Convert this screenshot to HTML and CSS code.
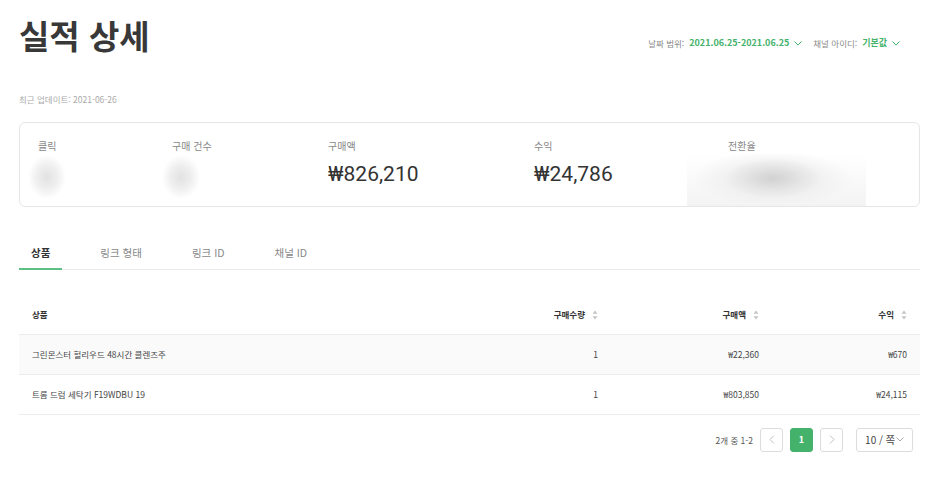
FILE: index.html
```html
<!DOCTYPE html>
<html lang="ko">
<head>
    <meta charset="UTF-8">
    <title>실적 상세</title>
    <link rel="stylesheet" href="styles.css">
</head>
<body>
    <div id="wrap">
        <header class="top">
            <h1 class="title">실적 상세</h1>
            <div class="filters">
                <span class="filter_label">날짜 범위:</span>
                <span class="filter_value">2021.06.25-2021.06.25</span>
                <svg class="chev" width="8" height="5" viewBox="0 0 8 5"><path d="M0.5 0.5 L4 4 L7.5 0.5" fill="none" stroke="#45b26b" stroke-width="1"/></svg>
                <span class="filter_label gap">채널 아이디:</span>
                <span class="filter_value">기본값</span>
                <svg class="chev" width="8" height="5" viewBox="0 0 8 5"><path d="M0.5 0.5 L4 4 L7.5 0.5" fill="none" stroke="#45b26b" stroke-width="1"/></svg>
            </div>
        </header>

        <p class="updated">최근 업데이트: 2021-06-26</p>

        <section class="summary">
            <div class="stat">
                <p class="stat_label">클릭</p>
                <div class="blob"></div>
            </div>
            <div class="stat">
                <p class="stat_label">구매 건수</p>
                <div class="blob"></div>
            </div>
            <div class="stat">
                <p class="stat_label">구매액</p>
                <p class="stat_value">₩826,210</p>
            </div>
            <div class="stat">
                <p class="stat_label">수익</p>
                <p class="stat_value">₩24,786</p>
            </div>
            <div class="stat">
                <p class="stat_label">전환율</p>
                <div class="blob_wide"></div>
            </div>
        </section>

        <ul class="tabs">
            <li class="tab active">상품</li>
            <li class="tab">링크 형태</li>
            <li class="tab">링크 ID</li>
            <li class="tab">채널 ID</li>
        </ul>

        <table class="result">
            <colgroup>
                <col style="width: 432px">
                <col style="width: 160px">
                <col style="width: 161px">
                <col style="width: 148px">
            </colgroup>
            <thead>
                <tr>
                    <th class="left">상품</th>
                    <th>구매수량<span class="sort"><svg width="6" height="10" viewBox="0 0 6 10"><path d="M3 0.5 L5.5 3.8 L0.5 3.8 Z M3 9.5 L5.5 6.2 L0.5 6.2 Z" fill="#c4c4c4"/></svg></span></th>
                    <th>구매액<span class="sort"><svg width="6" height="10" viewBox="0 0 6 10"><path d="M3 0.5 L5.5 3.8 L0.5 3.8 Z M3 9.5 L5.5 6.2 L0.5 6.2 Z" fill="#c4c4c4"/></svg></span></th>
                    <th>수익<span class="sort"><svg width="6" height="10" viewBox="0 0 6 10"><path d="M3 0.5 L5.5 3.8 L0.5 3.8 Z M3 9.5 L5.5 6.2 L0.5 6.2 Z" fill="#c4c4c4"/></svg></span></th>
                </tr>
            </thead>
            <tbody>
                <tr class="hover">
                    <td class="left">그린몬스터 헐리우드 48시간 클렌즈주</td>
                    <td>1</td>
                    <td>₩22,360</td>
                    <td>₩670</td>
                </tr>
                <tr>
                    <td class="left">트롬 드럼 세탁기 F19WDBU 19</td>
                    <td>1</td>
                    <td>₩803,850</td>
                    <td>₩24,115</td>
                </tr>
            </tbody>
        </table>

        <div class="pager">
            <span class="pager_total">2개 중 1-2</span>
            <span class="page_btn"><svg width="6" height="9" viewBox="0 0 6 9"><path d="M5 0.5 L1 4.5 L5 8.5" fill="none" stroke="#c0c0c0" stroke-width="1"/></svg></span>
            <span class="page_btn current">1</span>
            <span class="page_btn"><svg width="6" height="9" viewBox="0 0 6 9"><path d="M1 0.5 L5 4.5 L1 8.5" fill="none" stroke="#c0c0c0" stroke-width="1"/></svg></span>
            <span class="page_size">10 / 쪽<svg width="8" height="5" viewBox="0 0 8 5"><path d="M0.5 0.5 L4 4 L7.5 0.5" fill="none" stroke="#aaa" stroke-width="1"/></svg></span>
        </div>
    </div>
</body>
</html>
```

FILE: styles.css
```css
* {
    margin: 0;
    padding: 0;
    box-sizing: border-box;
}

html, body {
    background-color: #fff;
    color: #333;
    font-family: "Noto Sans CJK KR", "Noto Sans", sans-serif;
}

ul {
    list-style: none;
}

#wrap {
    width: 936px;
    padding: 0 16px 0 19px;
}

/* 상단 제목 + 필터 */
.top {
    display: flex;
    justify-content: space-between;
    align-items: flex-start;
    height: 70px;
}

.title {
    font-size: 33px;
    font-weight: bold;
    line-height: 70px;
    color: #383838;
}

.filters {
    display: flex;
    align-items: center;
    margin-top: 36px;
    margin-right: 20px;
    line-height: 14px;
    font-size: 9px;
}

.filter_label {
    color: #888;
    font-size: 8.5px;
    margin-right: 5px;
}

.filter_label.gap {
    margin-left: 11px;
}

.filter_value {
    color: #45b26b;
    font-weight: bold;
}

.chev {
    margin-left: 5px;
}

.updated {
    margin-top: 22px;
    font-size: 8.5px;
    line-height: 14px;
    color: #aaa;
}

/* 요약 카드 */
.summary {
    margin-top: 16px;
    height: 85px;
    border: 1px solid #e6e6e6;
    border-radius: 6px;
    padding: 15px 0 0 18px;
    display: grid;
    grid-template-columns: 134px 156px 206px 194px 1fr;
    overflow: hidden;
}

.stat_label {
    font-size: 10px;
    line-height: 16px;
    color: #888;
}

.stat_value {
    margin-top: 6px;
    font-family: Roboto, "Noto Sans CJK KR", sans-serif;
    font-size: 21px;
    line-height: 28px;
    color: #333;
}

.blob {
    width: 38px;
    height: 44px;
    margin: 1px 0 0 -10px;
    background: radial-gradient(farthest-side, #e2e2e2, #efefef 55%, rgba(255, 255, 255, 0));
}

.blob_wide {
    width: 179px;
    height: 54px;
    margin-left: -41px;
    background:
        radial-gradient(ellipse 48px 20px at 48% 45%, #d2d2d2, rgba(228, 228, 228, 0.7) 65%, rgba(255, 255, 255, 0)),
        radial-gradient(ellipse 80px 28px at 48% 45%, #e6e6e6, rgba(255, 255, 255, 0)),
        linear-gradient(to bottom, #fff, #f3f3f3);
}

/* 탭 */
.tabs {
    margin-top: 26px;
    display: flex;
    gap: 26px;
    height: 37px;
    border-bottom: 1px solid #ebebeb;
}

.tab {
    padding: 4px 12px 0;
    height: 37px;
    line-height: 31px;
    font-size: 10.5px;
    color: #888;
    border-bottom: 2px solid transparent;
}

.tab.active {
    color: #333;
    font-weight: bold;
    border-bottom-color: #5cbf83;
}

/* 표 */
.result {
    margin-top: 25px;
    width: 901px;
    table-layout: fixed;
    border-collapse: collapse;
    font-size: 8.5px;
    color: #444;
}

.result th,
.result td {
    text-align: right;
    padding: 0 13px;
    border-bottom: 1px solid #ececec;
}

.result th {
    height: 39px;
    font-weight: bold;
    color: #333;
}

.result td {
    height: 40px;
}

.result .left {
    text-align: left;
}

.result tr.hover td {
    background-color: #fafafa;
}

.sort {
    display: inline-block;
    margin-left: 7px;
    vertical-align: -2px;
}

.sort svg {
    display: block;
}

/* 페이지 */
.pager {
    margin-top: 13px;
    padding-right: 7px;
    display: flex;
    justify-content: flex-end;
    align-items: center;
}

.pager_total {
    font-size: 8.5px;
    color: #555;
    margin-right: 7px;
}

.page_btn {
    width: 23px;
    height: 24px;
    border: 1px solid #dcdcdc;
    border-radius: 3px;
    display: flex;
    justify-content: center;
    align-items: center;
    margin-right: 7px;
    font-size: 9px;
    font-weight: bold;
}

.page_btn.current {
    background-color: #45b26b;
    border-color: #45b26b;
    color: #fff;
}

.page_btn:nth-child(4) {
    margin-right: 13px;
}

.page_size {
    width: 57px;
    height: 24px;
    border: 1px solid #dcdcdc;
    border-radius: 3px;
    display: flex;
    align-items: center;
    justify-content: center;
    gap: 1px;
    font-size: 10px;
    color: #444;
}
```
